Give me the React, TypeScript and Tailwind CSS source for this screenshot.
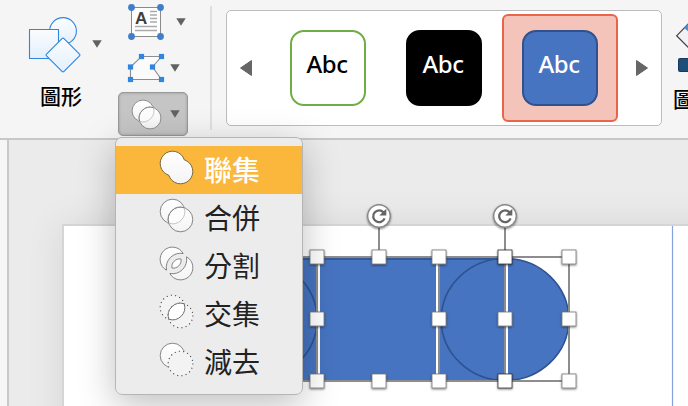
import type { ReactNode } from "react";
import { clsx } from "clsx";

type MergeKind = "union" | "combine" | "fragment" | "intersect" | "subtract";

const mergeItems: { kind: MergeKind; label: string }[] = [
  { kind: "union", label: "聯集" },
  { kind: "combine", label: "合併" },
  { kind: "fragment", label: "分割" },
  { kind: "intersect", label: "交集" },
  { kind: "subtract", label: "減去" },
];

const styleCards = [
  { id: "outline", box: "border-[#70ad47] bg-white text-black" },
  { id: "solid", box: "border-black bg-black text-white" },
  { id: "accent", box: "border-[#2f528f] bg-[#4674c1] text-white", selected: true },
];

function Caret({ className }: { className?: string }) {
  return (
    <svg viewBox="0 0 10 8" className={clsx("h-2 w-2.5 shrink-0", className)}>
      <path d="M.3 .3H9.7L5 7.8Z" fill="#626262" />
    </svg>
  );
}

function ShapesIcon() {
  return (
    <svg viewBox="0 0 54 57" className="h-[57px] w-[54px] shrink-0">
      <defs>
        <linearGradient id="shape-fill" x1="0" y1="0" x2="0" y2="1">
          <stop offset="0" stopColor="#fbfdff" />
          <stop offset="1" stopColor="#e2effc" />
        </linearGradient>
      </defs>
      <g fill="url(#shape-fill)" stroke="#2f86dc" strokeWidth="1.1" strokeLinejoin="round">
        <circle cx="35" cy="15" r="13.4" />
        <rect x="1.5" y="13.5" width="29" height="29" />
        <path d="M34 22.6Q35 21.6 36 22.6L51.5 38.2Q52.3 39 51.5 39.8L36 55.3Q35 56.3 34 55.3L18.5 39.8Q17.7 39 18.5 38.2Z" />
      </g>
    </svg>
  );
}

function TextBoxIcon() {
  return (
    <svg viewBox="0 0 38 38" className="h-[38px] w-[38px] shrink-0">
      <rect x="4.5" y="4.5" width="29" height="29" fill="#fff" stroke="#8a8a8a" />
      <text x="8" y="21" fontSize="17" fontWeight="700" fill="#3f3f3f" fontFamily="Liberation Sans, sans-serif">
        A
      </text>
      <path
        d="M23 8.5h7M23 12h7M23 15.5h7M23 19h7M8 23.5h22M8 27.5h22"
        stroke="#aaa"
        strokeWidth="1.5"
      />
      {[4.5, 33.5].map((x) =>
        [4.5, 33.5].map((y) => <circle key={`${x}-${y}`} cx={x} cy={y} r="3.4" fill="#3f7fc8" />),
      )}
    </svg>
  );
}

const polyPoints = [
  [14.5, 3.5],
  [34.5, 3.5],
  [25.5, 14],
  [34.5, 26.5],
  [3.5, 26.5],
  [3.5, 14],
];

function EditPointsIcon() {
  return (
    <svg viewBox="0 0 38 30" className="h-[30px] w-[38px] shrink-0">
      <polygon points={polyPoints.map((p) => p.join(",")).join(" ")} fill="#fbfbfb" stroke="#8d8d8d" strokeWidth="1.1" />
      {polyPoints.map(([x, y]) => (
        <rect key={`${x}-${y}`} x={x - 2.6} y={y - 2.6} width="5.2" height="5.2" fill="#2f86e0" />
      ))}
    </svg>
  );
}

const LENS = "M9.78 25.22A12.3 12.3 0 0 1 25.22 9.78A12.3 12.3 0 0 1 9.78 25.22Z";

function MergeIcon({ kind, className }: { kind: MergeKind; className?: string }) {
  const line = { stroke: "#777", strokeWidth: 0.9, fill: "url(#merge-fill)" };
  const dots = { stroke: "#444", strokeWidth: 1.1, strokeDasharray: "1.1 3.2", fill: "#f3f3f3" };
  let art: ReactNode;
  if (kind === "union") {
    art = (
      <path d="M25.22 9.78A12.3 12.3 0 1 0 9.78 25.22A12.3 12.3 0 1 0 25.22 9.78Z" {...line} stroke="#6f5b32" />
    );
  } else if (kind === "combine") {
    art = (
      <>
        <circle cx="13.5" cy="13.5" r="12.3" {...line} />
        <circle cx="21.5" cy="21.5" r="12.3" {...line} />
        <path d={LENS} fill="#fdfdfd" stroke="#bbb" strokeWidth=".9" />
        <path d="M9.78 25.22A12.3 12.3 0 0 1 25.22 9.78" fill="none" stroke="#777" strokeWidth=".9" />
      </>
    );
  } else if (kind === "fragment") {
    art = (
      <>
        <path d="M7.5 24.2A12.3 12.3 0 1 1 24.2 7.5A14.3 14.3 0 0 0 7.5 24.2Z" {...line} />
        <path d="M27.5 10.8A12.3 12.3 0 1 1 10.8 27.5A14.3 14.3 0 0 0 27.5 10.8Z" {...line} />
        <path d="M13 22A7.8 7.8 0 0 1 22 13A7.8 7.8 0 0 1 13 22Z" {...line} fill="#fff" />
      </>
    );
  } else if (kind === "intersect") {
    art = (
      <>
        <circle cx="13.5" cy="13.5" r="12.3" {...dots} />
        <circle cx="21.5" cy="21.5" r="12.3" {...dots} />
        <path d={LENS} fill="#fff" stroke="#6d6d6d" />
      </>
    );
  } else {
    art = (
      <>
        <circle cx="13.5" cy="13.5" r="12.3" {...line} />
        <circle cx="21.5" cy="21.5" r="12.8" fill="#f0f0f0" />
        <circle cx="21.5" cy="21.5" r="12.3" {...dots} />
      </>
    );
  }
  return (
    <svg viewBox="0 0 35 35" className={clsx("shrink-0", className)}>
      <defs>
        <linearGradient id="merge-fill" x1="0" y1="0" x2="0" y2="1">
          <stop offset="0" stopColor="#fff" />
          <stop offset="1" stopColor="#f4f4f4" />
        </linearGradient>
      </defs>
      {art}
    </svg>
  );
}

function StyleGallery() {
  return (
    <div className="mt-2.5 ml-3.5 flex h-[116px] w-[436px] shrink-0 items-start rounded-[5px] border border-[#bdbdbd] bg-white pt-[3px]">
      <svg viewBox="0 0 12 16" className="mt-[46px] ml-[13px] h-4 w-3 shrink-0">
        <path d="M11.5 .5V15.5L.5 8Z" fill="#666" stroke="#666" strokeLinejoin="round" />
      </svg>
      <div className="ml-[18px] flex shrink-0">
        {styleCards.map((c) => (
          <div
            key={c.id}
            className={clsx(
              "flex h-[108px] w-[116px] items-center justify-center rounded-[6px] border-2",
              c.selected ? "border-[#e96549] bg-[#f4c3b9]" : "border-transparent",
            )}
          >
            <div
              className={clsx(
                "flex h-[76px] w-[76px] items-start justify-center rounded-[14px] border-2 pt-[15px] pr-0.5 text-2xl leading-[34px] font-medium tracking-[-0.4px]",
                c.box,
              )}
            >
              Abc
            </div>
          </div>
        ))}
      </div>
      <svg viewBox="0 0 12 16" className="mt-[46px] ml-[18px] h-4 w-3 shrink-0">
        <path d="M.5 .5V15.5L11.5 8Z" fill="#666" stroke="#666" strokeLinejoin="round" />
      </svg>
    </div>
  );
}

function Toolbar() {
  return (
    <div className="flex h-[140px] w-full overflow-hidden border-b-2 border-[#c8c8c8] bg-[#f5f5f5]">
      <div className="w-[118px] shrink-0 pt-4 pl-7">
        <div className="flex items-center">
          <ShapesIcon />
          <Caret className="mb-px ml-2.5" />
        </div>
        <div className="mt-2 ml-3 text-[21px] leading-[30px] font-medium text-black">圖形</div>
      </div>
      <div className="w-[92px] shrink-0 pt-[3px]">
        <div className="flex items-center pl-[9px]">
          <TextBoxIcon />
          <Caret className="ml-[11px]" />
        </div>
        <div className="mt-3 flex items-center pl-[9px]">
          <EditPointsIcon />
          <Caret className="ml-[5px]" />
        </div>
        <div className="mt-[9px] flex h-[44px] w-[70px] items-center rounded-[5px] border border-[#999] bg-[#c5c5c5] pl-3 shadow-[inset_0_0_3px_#999]">
          <MergeIcon kind="combine" className="h-[31px] w-[31px]" />
          <Caret className="ml-2" />
        </div>
      </div>
      <div className="mt-1.5 h-[124px] w-0.5 shrink-0 bg-[#dfdfdf]" />
      <StyleGallery />
      <div className="ml-[11px] w-[26px] shrink-0 overflow-hidden pt-[18px]">
        <svg viewBox="0 0 46 60" className="ml-[2px] h-[60px] w-[46px] max-w-none">
          <path d="M1.6 17.8L20 -1L38 17.5L20 36Z" fill="#f1f1f6" stroke="#444" strokeWidth="1.2" />
          <path d="M9 10L20 -1V19Z" fill="#4b91da" />
          <rect x="3.5" y="40.5" width="40" height="13" rx="1" fill="#1f4e79" stroke="#173c5e" />
        </svg>
        <div className="mt-1.5 text-[21px] leading-[30px] font-medium text-black">圖</div>
      </div>
    </div>
  );
}

const handles = [317, 379, 439, 505, 569].flatMap((x) =>
  [257, 319, 381].filter((y) => !(x === 379 && y === 319)).map((y) => ({ x, y })),
);

function Slide() {
  return (
    <svg viewBox="64 226 624 180" className="block h-[180px] w-[624px] overflow-visible">
      <defs>
        <filter id="soft" x="-50%" y="-50%" width="200%" height="200%">
          <feDropShadow dx="0" dy="1" stdDeviation="1.2" floodOpacity=".5" />
        </filter>
      </defs>
      <path d="M672.5 226V406" stroke="#84a3db" strokeWidth="1.2" />
      <rect x="190" y="258" width="315" height="123" fill="#4674c1" />
      <path d="M190 259H505" stroke="#2f528f" strokeWidth="1.6" />
      <ellipse cx="253" cy="319.5" rx="64" ry="61" fill="none" stroke="#2f528f" strokeWidth="1.6" />
      <ellipse cx="505" cy="319.5" rx="63.8" ry="61" fill="#4674c1" stroke="#2f528f" strokeWidth="1.6" />
      <path d="M319 258V380M437 258V380M507 258V380" stroke="#fff" strokeWidth="2" />
      <g stroke="#8d8d8d" strokeWidth="2" fill="none">
        <path d="M190 257H569V381H190M317 257V381M439 257V381M505 257V381M379 216V257M505 216V257" />
      </g>
      {handles.map(({ x, y }) => (
        <rect
          key={`${x}-${y}`}
          x={x - 7}
          y={y - 7}
          width="14"
          height="14"
          fill="#fff"
          stroke={x === 505 && y !== 319 ? "#333" : "#777"}
          strokeWidth=".8"
          filter="url(#soft)"
        />
      ))}
      {[379, 505].map((x) => (
        <g key={x} transform={`translate(${x} 216)`}>
          <circle r="11.3" fill="#fff" stroke="#888" strokeWidth="1.4" filter="url(#soft)" />
          <path d="M4.6 -3.6A5.9 5.9 0 1 0 5.6 2.4" fill="none" stroke="#666" strokeWidth="2.3" />
          <path d="M7.3 -7.3V-.5H.3Z" fill="#666" />
        </g>
      ))}
    </svg>
  );
}

function MergeMenu() {
  return (
    <div className="absolute top-[137px] left-[115px] h-[258px] w-[188px] overflow-hidden rounded-[7px] border border-[#b5b5b5] bg-[#ececec] pt-2">
      {mergeItems.map(({ kind, label }, i) => (
        <div
          key={kind}
          className={clsx(
            "flex h-12 items-center pl-[43px] text-[28px] leading-[48px]",
            i === 0 ? "bg-[#fab73c] font-medium text-white" : "text-[#222]",
          )}
        >
          <MergeIcon kind={kind} className="mb-[5px] h-[35px] w-[35px]" />
          <span className="ml-2.5">{label}</span>
        </div>
      ))}
    </div>
  );
}

export default function App() {
  return (
    <div className="relative h-[406px] w-[688px] overflow-hidden bg-[#ebebeb] font-['Noto_Sans','Noto_Sans_CJK_TC',sans-serif]">
      <Toolbar />
      <div className="flex h-[266px]">
        <div className="w-[9px] shrink-0 border-r-2 border-[#c8c8c8] bg-[#f6f6f6]" />
        <div className="flex-1 overflow-hidden bg-[#ebebeb] pt-[84px] pl-[53px]">
          <div className="h-[240px] w-[680px] border-t-2 border-l-2 border-[#d5d5d5] bg-white shadow-[0_0_36px_rgba(0,0,0,0.09)]">
            <Slide />
          </div>
        </div>
      </div>
      <div className="absolute top-[137px] left-[115px] h-[258px] w-[188px] rounded-[7px] shadow-[0_10px_36px_rgba(0,0,0,0.25)]" />
      <MergeMenu />
    </div>
  );
}
